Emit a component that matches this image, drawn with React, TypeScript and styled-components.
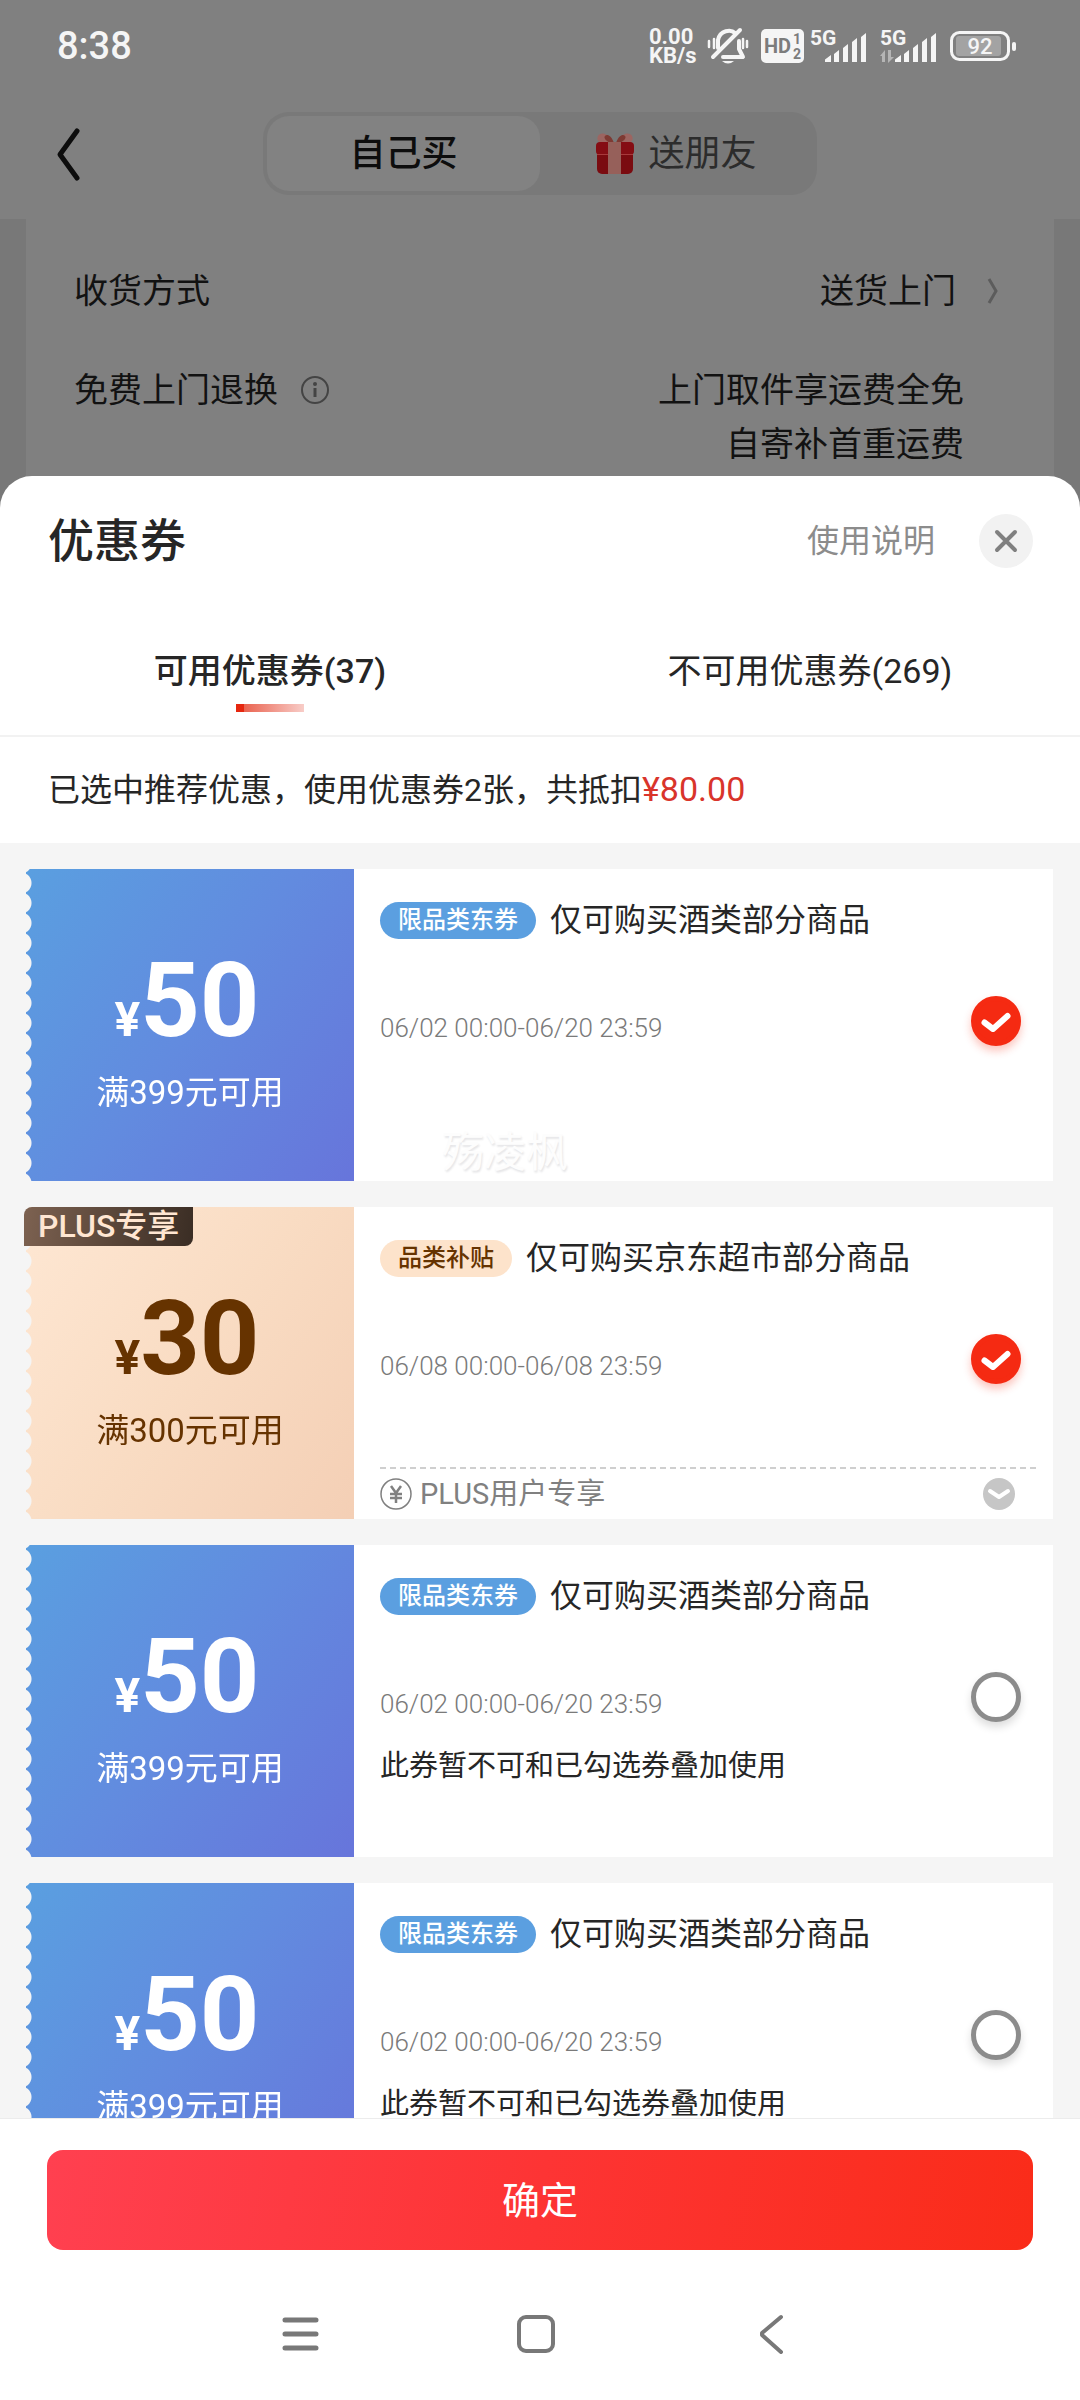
import React, { useState } from "react";
import styled, { createGlobalStyle, css } from "styled-components";

const GlobalStyle = createGlobalStyle`
  *, *::before, *::after { box-sizing: border-box; }
  body {
    margin: 0;
    background: #787878;
    font-family: Roboto, "Noto Sans CJK SC", sans-serif;
    color: #262626;
  }
  button, input { margin: 0; padding: 0; font: inherit; color: inherit; border: 0; background: none; }
  h1, h2, p, ul, dl, dd, dt { margin: 0; padding: 0; font-weight: 400; }
  svg { display: block; }
`;

/* ---------- page behind the sheet ---------- */

const Screen = styled.div`
  display: flex;
  flex-direction: column;
  height: 100vh;
`;

const StatusBar = styled.div`
  display: flex;
  align-items: center;
  justify-content: space-between;
  height: 92px;
  padding: 0 64px 0 57px;
  background: #808080;
  color: #f5f5f5;
`;

const Clock = styled.span`
  font-size: 38px;
  line-height: 44px;
  font-weight: 500;
`;

const StatusIcons = styled.div`
  display: flex;
  align-items: center;
`;

const NetSpeed = styled.span`
  width: 58px;
  font-size: 22px;
  line-height: 19px;
  font-weight: 700;
`;

const Bell = styled.svg`
  margin-right: 12px;
`;

const Hd = styled.svg`
  margin-right: 6px;
`;

const Signal = styled.svg`
  margin-right: 13px;
`;

const TopBar = styled.header`
  display: grid;
  grid-template-columns: 1fr auto 1fr;
  align-items: center;
  height: 127px;
  padding: 0 52px 4px;
  background: #808080;
`;

const BackButton = styled.button`
  width: 40px;
  height: 60px;
`;

const Segmented = styled.div`
  display: flex;
  padding: 4px;
  border-radius: 26px;
  background: #797979;
`;

const Segment = styled.button<{ $active?: boolean }>`
  display: flex;
  align-items: center;
  justify-content: center;
  gap: 14px;
  width: 273px;
  height: 75px;
  border-radius: 22px;
  font-size: 36px;
  line-height: 48px;
  color: #2c2c2c;
  ${(p) =>
    p.$active &&
    css`
      background: #828282;
      color: #0d0d0d;
      font-weight: 500;
    `}
`;

const DeliveryCard = styled.dl`
  display: flex;
  flex-direction: column;
  gap: 45px;
  margin: 0 26px;
  padding: 45px 48px 37px;
  background: #808080;
  color: #121212;
  font-size: 34px;
  line-height: 54px;
`;

const DeliveryRow = styled.div<{ $end: number }>`
  display: flex;
  justify-content: space-between;
  padding-right: ${(p) => p.$end}px;
`;

const DeliveryLabel = styled.dt`
  display: flex;
  align-items: center;
  gap: 22px;
  height: 54px;
`;

const DeliveryValue = styled.dd`
  display: flex;
  align-items: center;
  gap: 30px;
  text-align: right;
`;

/* ---------- sheet ---------- */

const Sheet = styled.section`
  position: relative;
  display: flex;
  flex: 1;
  flex-direction: column;
  min-height: 0;
  margin-top: -32px;
  border-radius: 32px 32px 0 0;
  background: #fff;
  overflow: hidden;
`;

const SheetHeader = styled.div`
  display: flex;
  flex: none;
  align-items: center;
  height: 130px;
  padding: 0 47px 0 48px;
`;

const SheetTitle = styled.h1`
  flex: 1;
  font-size: 46px;
  line-height: 60px;
  font-weight: 500;
`;

const HelpLink = styled.a`
  margin-right: 44px;
  font-size: 32px;
  line-height: 48px;
  color: #8c8c8c;
  text-decoration: none;
`;

const CloseButton = styled.button`
  display: grid;
  place-items: center;
  width: 54px;
  height: 54px;
  border-radius: 50%;
  background: #f2f2f2;
`;

const Tabs = styled.div`
  display: grid;
  flex: none;
  grid-template-columns: 1fr 1fr;
  height: 131px;
  border-bottom: 2px solid #f2f2f2;
`;

const Tab = styled.button<{ $active: boolean }>`
  display: flex;
  flex-direction: column;
  align-items: center;
  padding-top: 41px;
  font-size: 34px;
  line-height: 48px;
  font-weight: ${(p) => (p.$active ? 500 : 400)};
  &::after {
    content: "";
    width: 68px;
    height: 8px;
    margin-top: 9px;
    background: ${(p) =>
      p.$active ? "linear-gradient(90deg, #e6270f 0 8px, #ea6350 8px, #f8cdc8)" : "none"};
  }
`;

const Summary = styled.p`
  flex: none;
  padding: 28px 48px 29px;
  font-size: 32px;
  line-height: 48px;
`;

const Amount = styled.span`
  color: #d9342b;
  font-size: 34px;
`;

const CouponList = styled.ul`
  display: flex;
  flex: 1;
  flex-direction: column;
  gap: 26px;
  min-height: 0;
  padding: 26px 27px 26px 26px;
  background: #f5f5f5;
  list-style: none;
  overflow-y: auto;
  scrollbar-width: none;
`;

const CouponCard = styled.li`
  position: relative;
  display: flex;
  flex: none;
  min-height: 312px;
`;

const Stub = styled.div<{ $plus?: boolean }>`
  display: flex;
  flex: none;
  flex-direction: column;
  align-items: center;
  width: 328px;
  padding-top: 80px;
  color: ${(p) => (p.$plus ? "#663300" : "#fff")};
  background: ${(p) =>
    p.$plus
      ? "linear-gradient(125deg, #fee7d3, #f9dcc3 50%, #f4cfb5)"
      : "linear-gradient(125deg, #5a9fe0, #628bdf 50%, #6775db)"};
  mask-image: radial-gradient(circle at -5px 50%, transparent 10px, #000 11px);
  mask-size: 100% 20px;
  mask-position: 0 4px;
`;

const Price = styled.div`
  display: flex;
  align-items: baseline;
  padding-right: 6px;
  font-size: 104px;
  line-height: 104px;
  font-weight: 700;
`;

const Yen = styled.span`
  font-size: 48px;
  line-height: 48px;
`;

const Threshold = styled.p`
  margin-top: 20px;
  font-size: 33px;
  line-height: 40px;
`;

const PlusTag = styled.span`
  position: absolute;
  top: 0;
  left: -2px;
  padding: 0 14px;
  border-radius: 8px 0 8px 0;
  background: linear-gradient(100deg, #7d6251, #3a2d24);
  color: #ffe6d2;
  font-size: 32px;
  line-height: 39px;
  font-weight: 500;
`;

const Body = styled.div`
  display: flex;
  flex: 1;
  flex-direction: column;
  padding: 0 15px 0 26px;
  background: #fff;
`;

const BodyMain = styled.div`
  display: flex;
  flex: 1;
`;

const Info = styled.div`
  flex: 1;
  padding-top: 32px;
`;

const TitleRow = styled.div`
  display: flex;
  align-items: center;
  gap: 14px;
  height: 38px;
`;

const Badge = styled.span<{ $plus?: boolean }>`
  padding: 0 18px;
  border-radius: 19px;
  background: ${(p) => (p.$plus ? "#fde3cb" : "#5b9fe0")};
  color: ${(p) => (p.$plus ? "#663300" : "#fff")};
  font-size: 24px;
  line-height: 37px;
  font-weight: 500;
`;

const CouponTitle = styled.label`
  font-size: 32px;
  line-height: 38px;
`;

const Validity = styled.p`
  margin-top: 74px;
  font-size: 26px;
  line-height: 30px;
  font-weight: 300;
  color: #7a7a7a;
`;

const Note = styled.p`
  margin-top: 27px;
  font-size: 29px;
  line-height: 40px;
`;

const Check = styled.span`
  display: grid;
  width: 50px;
  height: 50px;
  margin: 127px 17px 0 0;
  & > * {
    grid-area: 1 / 1;
  }
  & > svg {
    pointer-events: none;
    z-index: 1;
  }
`;

const CheckInput = styled.input`
  appearance: none;
  width: 50px;
  height: 50px;
  border: 5px solid #8c8c8c;
  border-radius: 50%;
  background: #fff;
  box-shadow: 0 5px 8px rgba(0, 0, 0, 0.14);
  &:checked {
    border-color: #f52a12;
    background: #f52a12;
    box-shadow: 0 5px 8px rgba(245, 42, 18, 0.28);
  }
`;

const BodyFooter = styled.div`
  display: flex;
  align-items: center;
  gap: 8px;
  height: 52px;
  padding: 2px 23px 0 0;
  background: repeating-linear-gradient(90deg, #cfcfcf 0 6px, transparent 6px 10px) top / 100% 2px no-repeat;
  color: #808080;
  font-size: 29px;
  line-height: 40px;
`;

const FooterText = styled.span`
  flex: 1;
`;

const Watermark = styled.span`
  position: absolute;
  left: 416px;
  bottom: 0;
  font-size: 42px;
  line-height: 56px;
  color: #fdfdfd;
  text-shadow: 1px 2px 2px rgba(40, 40, 60, 0.12);
  pointer-events: none;
`;

const ActionBar = styled.div`
  flex: none;
  padding: 31px 47px 18px;
  border-top: 1px solid #ececec;
  background: #fff;
`;

const ConfirmButton = styled.button`
  width: 100%;
  height: 100px;
  padding-bottom: 5px;
  border-radius: 16px;
  background: linear-gradient(100deg, #ff4050, #fd3434 50%, #fa2c19);
  color: #fff;
  font-size: 38px;
`;

const SystemNav = styled.nav`
  display: flex;
  flex: none;
  justify-content: center;
  height: 132px;
  padding-right: 9px;
  background: #fff;
`;

const NavButton = styled.button`
  display: grid;
  place-items: center;
  width: 235px;
`;

/* ---------- icons ---------- */

const SignalIcon = ({ data }: { data?: boolean }) => (
  <Signal width="57" height="36" viewBox="0 0 57 36" fill="#f5f5f5">
    <text x="0" y="17" fontSize="21" fontWeight="700">5G</text>
    <path d="M15 31.500l6-4.500v7h-6zM24 26l5-4v12h-5zM33 20l5-4v18h-5zM42 14l5-4v24h-5zM51 9l5-4v29h-5z" strokeLinejoin="round" />
    {data && <path d="M0 28l5-6v12h-3v-6zM8 22h3v7h3l-6 6z" fill="#b5b5b5" />}
  </Signal>
);

const BellOffIcon = () => (
  <Bell width="42" height="38" viewBox="0 0 42 38" fill="none" stroke="#f5f5f5" strokeWidth="4" strokeLinecap="round" strokeLinejoin="round">
    <path d="M28 6C24 2 13 3 11 13v8" />
    <path d="M32 14v8l4 8H16" />
    <path d="M6 30L33 3" />
    <path d="M2 14v6M7 12v9M36 12v9M40 14v6" strokeWidth="2.500" />
    <path d="M15 34h12q-6 5-12 0z" fill="#f5f5f5" stroke="none" />
  </Bell>
);

const HdIcon = () => (
  <Hd width="43" height="34" viewBox="0 0 43 34">
    <rect width="43" height="34" rx="5" fill="#f5f5f5" />
    <g fill="#7c7c7c" fontWeight="700">
      <text x="3" y="24" fontSize="20">HD</text>
      <text x="32" y="15" fontSize="14">1</text>
      <text x="32" y="30" fontSize="14">2</text>
    </g>
  </Hd>
);

const BatteryIcon = () => (
  <svg width="66" height="32" viewBox="0 0 66 32">
    <rect x="1.500" y="2.500" width="57" height="27" rx="8" fill="none" stroke="#f5f5f5" strokeWidth="3" />
    <rect x="6" y="6" width="45" height="20" rx="3" fill="#a3a3a3" />
    <rect x="62" y="12" width="4" height="9" rx="2" fill="#f5f5f5" />
    <text x="30" y="24" textAnchor="middle" fontSize="22" fontWeight="500" fill="#f5f5f5">92</text>
  </svg>
);

const GiftIcon = () => (
  <svg width="38" height="42" viewBox="0 0 38 42">
    <path d="M18 10C12-1 4-1 2 3s1 7 6 7z" fill="#9c6561" />
    <path d="M20 10C26-1 34-1 36 3s-1 7-6 7z" fill="#9c6561" />
    <path d="M18 10C15 2 11 1 9 3s2 6 6 7zM20 10c3-8 7-9 9-7s-2 6-6 7z" fill="#7e3a33" />
    <rect x="1" y="14" width="36" height="27" rx="5" fill="#7a0b10" />
    <rect x="0" y="9" width="38" height="13" rx="4" fill="#850d14" />
    <path d="M1 21.500h36" stroke="#a83a3c" strokeWidth="1" />
    <rect x="12" y="9" width="13" height="32" fill="#96605a" />
  </svg>
);

const InfoIcon = () => (
  <svg width="30" height="30" viewBox="0 0 30 30" fill="none" stroke="#444" strokeWidth="2">
    <circle cx="15" cy="15" r="13" />
    <path d="M15 13v9" strokeWidth="3" />
    <circle cx="15" cy="9" r="1" />
  </svg>
);

const YenCircleIcon = () => (
  <svg width="32" height="32" viewBox="0 0 32 32" fill="none" stroke="#808080">
    <circle cx="16" cy="16" r="15" strokeWidth="1.500" />
    <path d="M11 8l5 7 5-7M16 15v10M10 16h12M10 20h12" strokeWidth="2.500" />
  </svg>
);

const ExpandIcon = () => (
  <svg width="32" height="32" viewBox="0 0 32 32">
    <circle cx="16" cy="16" r="16" fill="#c6c6c6" />
    <path d="M7 13l9 6 9-6" fill="none" stroke="#fff" strokeWidth="4" strokeLinecap="round" strokeLinejoin="round" />
  </svg>
);

const TickIcon = () => (
  <svg width="50" height="50" viewBox="0 0 50 50" fill="none" stroke="#fff" strokeWidth="6" strokeLinecap="round" strokeLinejoin="round">
    <path d="M13.500 26.500l8.500 6.500 14.500-13" />
  </svg>
);

/* ---------- data ---------- */

type Coupon = {
  id: string;
  amount: number;
  threshold: string;
  badge: string;
  title: string;
  validity: string;
  selected: boolean;
  plus?: boolean;
  note?: string;
  watermark?: string;
};

const wine = {
  amount: 50,
  threshold: "满399元可用",
  badge: "限品类东券",
  title: "仅可购买酒类部分商品",
  validity: "06/02 00:00-06/20 23:59",
};

const coupons: Coupon[] = [
  { ...wine, id: "c1", selected: true, watermark: "殇凌枫" },
  {
    id: "c2",
    amount: 30,
    threshold: "满300元可用",
    badge: "品类补贴",
    title: "仅可购买京东超市部分商品",
    validity: "06/08 00:00-06/08 23:59",
    selected: true,
    plus: true,
  },
  { ...wine, id: "c3", selected: false, note: "此券暂不可和已勾选券叠加使用" },
  { ...wine, id: "c4", selected: false, note: "此券暂不可和已勾选券叠加使用" },
];

const CouponItem = ({ coupon }: { coupon: Coupon }) => {
  const [checked, setChecked] = useState(coupon.selected);
  return (
    <CouponCard>
      <Stub $plus={coupon.plus}>
        <Price>
          <Yen>¥</Yen>
          {coupon.amount}
        </Price>
        <Threshold>{coupon.threshold}</Threshold>
      </Stub>
      {coupon.plus && <PlusTag>PLUS专享</PlusTag>}
      <Body>
        <BodyMain>
          <Info>
            <TitleRow>
              <Badge $plus={coupon.plus}>{coupon.badge}</Badge>
              <CouponTitle htmlFor={coupon.id}>{coupon.title}</CouponTitle>
            </TitleRow>
            <Validity>{coupon.validity}</Validity>
            {coupon.note && <Note>{coupon.note}</Note>}
          </Info>
          <Check>
            <CheckInput
              type="checkbox"
              id={coupon.id}
              checked={checked}
              onChange={(e) => setChecked(e.target.checked)}
            />
            {checked && <TickIcon />}
          </Check>
        </BodyMain>
        {coupon.plus && (
          <BodyFooter>
            <YenCircleIcon />
            <FooterText>PLUS用户专享</FooterText>
            <button type="button" aria-label="展开">
              <ExpandIcon />
            </button>
          </BodyFooter>
        )}
      </Body>
      {coupon.watermark && <Watermark>{coupon.watermark}</Watermark>}
    </CouponCard>
  );
};

export default function App() {
  const [tab, setTab] = useState(0);
  return (
    <Screen>
      <GlobalStyle />
      <StatusBar>
        <Clock>8:38</Clock>
        <StatusIcons>
          <NetSpeed>
            0.00
            <br />
            KB/s
          </NetSpeed>
          <BellOffIcon />
          <HdIcon />
          <SignalIcon />
          <SignalIcon data />
          <BatteryIcon />
        </StatusIcons>
      </StatusBar>
      <TopBar>
        <BackButton type="button" aria-label="返回">
          <svg width="34" height="60" viewBox="0 0 34 60" fill="none" stroke="#0d0d0d" strokeWidth="5" strokeLinecap="round" strokeLinejoin="round">
            <path d="M25 7L8 30.500 25 54" />
          </svg>
        </BackButton>
        <Segmented>
          <Segment type="button" $active>自己买</Segment>
          <Segment type="button">
            <GiftIcon />
            送朋友
          </Segment>
        </Segmented>
      </TopBar>
      <DeliveryCard>
        <DeliveryRow $end={7}>
          <DeliveryLabel>收货方式</DeliveryLabel>
          <DeliveryValue>
            送货上门
            <svg width="13" height="28" viewBox="0 0 13 28" fill="none" stroke="#5c5c5c" strokeWidth="3">
              <path d="M3 2l7 12-7 12" />
            </svg>
          </DeliveryValue>
        </DeliveryRow>
        <DeliveryRow $end={42}>
          <DeliveryLabel>
            免费上门退换
            <InfoIcon />
          </DeliveryLabel>
          <DeliveryValue>
            <span>
              上门取件享运费全免
              <br />
              自寄补首重运费
            </span>
          </DeliveryValue>
        </DeliveryRow>
      </DeliveryCard>

      <Sheet role="dialog" aria-label="优惠券">
        <SheetHeader>
          <SheetTitle>优惠券</SheetTitle>
          <HelpLink href="#help">使用说明</HelpLink>
          <CloseButton type="button" aria-label="关闭">
            <svg width="24" height="24" viewBox="0 0 24 24" stroke="#808080" strokeWidth="4" strokeLinecap="round">
              <path d="M3 3l18 18M21 3L3 21" />
            </svg>
          </CloseButton>
        </SheetHeader>
        <Tabs role="tablist">
          {["可用优惠券(37)", "不可用优惠券(269)"].map((label, i) => (
            <Tab key={label} type="button" role="tab" aria-selected={tab === i} $active={tab === i} onClick={() => setTab(i)}>
              {label}
            </Tab>
          ))}
        </Tabs>
        <Summary>
          已选中推荐优惠，使用优惠券2张，共抵扣<Amount>¥80.00</Amount>
        </Summary>
        <CouponList>
          {coupons.map((c) => (
            <CouponItem key={c.id} coupon={c} />
          ))}
        </CouponList>
        <ActionBar>
          <ConfirmButton type="button">确定</ConfirmButton>
        </ActionBar>
        <SystemNav>
          <NavButton type="button" aria-label="最近任务">
            <svg width="40" height="40" viewBox="0 0 40 40" stroke="#787878" strokeWidth="5" strokeLinecap="round">
              <path d="M4 6h31M4 20h31M4 34h31" />
            </svg>
          </NavButton>
          <NavButton type="button" aria-label="主屏幕">
            <svg width="40" height="40" viewBox="0 0 40 40" fill="none" stroke="#787878" strokeWidth="4">
              <rect x="3" y="3" width="34" height="34" rx="7" />
            </svg>
          </NavButton>
          <NavButton type="button" aria-label="后退">
            <svg width="26" height="40" viewBox="0 0 26 40" fill="none" stroke="#787878" strokeWidth="4" strokeLinecap="round" strokeLinejoin="round">
              <path d="M23 3L4 19v2l19 17" />
            </svg>
          </NavButton>
        </SystemNav>
      </Sheet>
    </Screen>
  );
}
